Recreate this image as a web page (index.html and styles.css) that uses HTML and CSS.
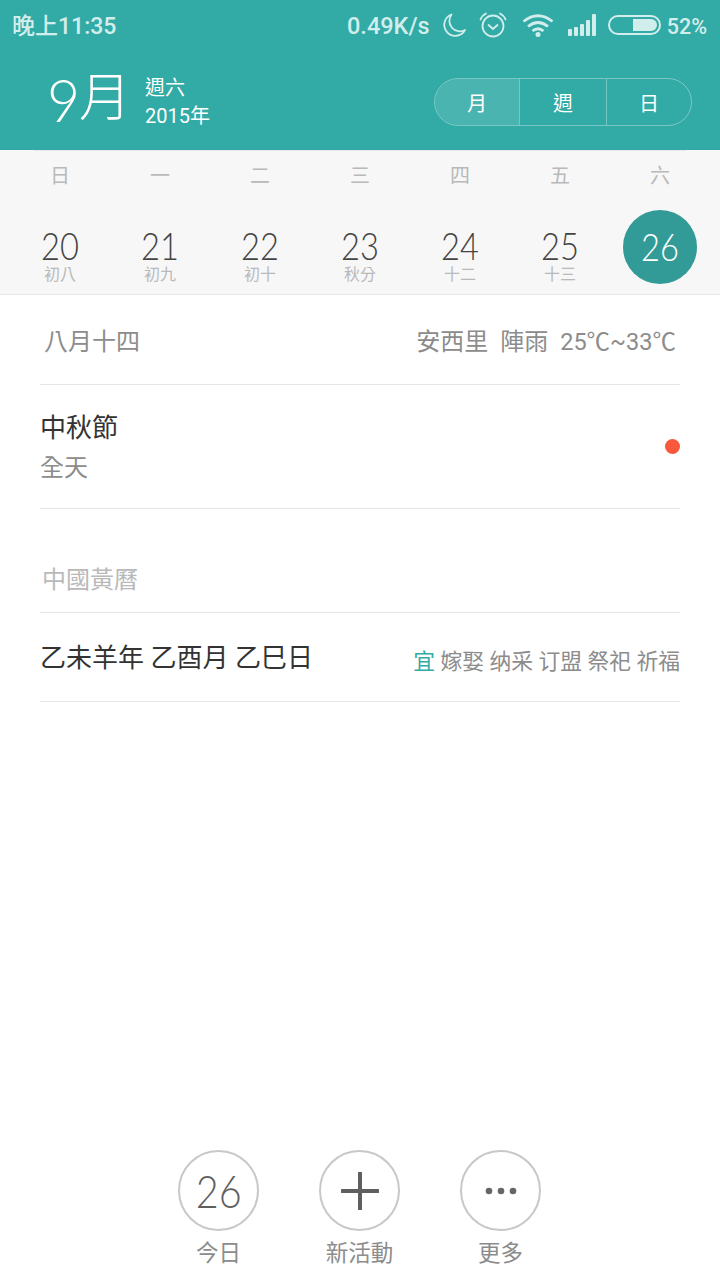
FILE: index.html
```html
<!DOCTYPE html>
<html lang="zh-Hant">
<head>
  <meta charset="UTF-8" />
  <meta name="viewport" content="width=device-width, initial-scale=1.0" />
  <title>日曆</title>
  <link rel="stylesheet" href="styles.css">
</head>
<body>
  <div class="app">
    <header class="top">
      <div class="status">
        <span class="clock">晚上11:35</span>
        <div class="status-right">
          <span class="speed">0.49K/s</span>
          <svg class="ic-moon" width="26" height="26" viewBox="0 0 26 26"><path d="M10.500 2.500a11 11 0 1 0 13.500 15.500a10.500 10.500 0 0 1-13.500-15.500z" fill="none" stroke="#d2eeec" stroke-width="1.800" stroke-linejoin="round"/></svg>
          <svg class="ic-alarm" width="28" height="26" viewBox="0 0 28 26"><circle cx="14" cy="14" r="10.500" fill="none" stroke="#d2eeec" stroke-width="1.800"/><path d="M9.500 13l4.500 4l4.500-4M1.500 7.500Q3 3.500 7 1.500M26.500 7.500Q25 3.500 21 1.500" fill="none" stroke="#d2eeec" stroke-width="1.800" stroke-linecap="round"/></svg>
          <svg class="ic-wifi" width="32" height="24" viewBox="0 0 32 24"><path d="M1.500 8.500Q16-3 30.500 8.500M6 13.500Q16 5.500 26 13.500M10.500 18Q16 13.500 21.500 18" fill="none" stroke="#d2eeec" stroke-width="2.800"/><circle cx="16" cy="21.500" r="2.500" fill="#d2eeec"/></svg>
          <svg class="ic-signal" width="28" height="22" viewBox="0 0 28 22"><g fill="#d2eeec"><rect x="0" y="15" width="4" height="7" rx="1"/><rect x="6" y="13" width="4" height="9" rx="1"/><rect x="12" y="10" width="4" height="12" rx="1"/><rect x="18" y="6" width="4" height="16" rx="1"/><rect x="24" y="0" width="4" height="22" rx="1"/></g></svg>
          <div class="battery"><div class="battery-fill"></div></div>
          <span class="percent">52%</span>
        </div>
      </div>
      <div class="title-bar">
        <div class="month"><span class="month-num">9</span><span class="month-char">月</span></div>
        <div class="month-sub">
          <span>週六</span>
          <span>2015年</span>
        </div>
        <div class="switch">
          <div class="switch-item active">月</div>
          <div class="switch-item">週</div>
          <div class="switch-item">日</div>
        </div>
      </div>
    </header>

    <section class="week">
      <div class="week-head">
        <span>日</span><span>一</span><span>二</span><span>三</span><span>四</span><span>五</span><span>六</span>
      </div>
      <div class="week-days">
        <div class="day"><b>20</b><small>初八</small></div>
        <div class="day"><b>21</b><small>初九</small></div>
        <div class="day"><b>22</b><small>初十</small></div>
        <div class="day"><b>23</b><small>秋分</small></div>
        <div class="day"><b>24</b><small>十二</small></div>
        <div class="day"><b>25</b><small>十三</small></div>
        <div class="day today"><div class="today-circle"><span>26</span></div></div>
      </div>
    </section>

    <main class="content">
      <div class="row row-info">
        <span class="lunar">八月十四</span>
        <span class="weather"><span>安西里</span><span>陣雨</span><span class="temp">25℃~33℃</span></span>
      </div>
      <div class="row row-event">
        <div>
          <div class="event-name">中秋節</div>
          <div class="event-time">全天</div>
        </div>
        <span class="dot"></span>
      </div>
      <div class="row row-label">中國黃曆</div>
      <div class="row row-almanac">
        <span class="ganzhi">乙未羊年 乙酉月 乙巳日</span>
        <span class="good"><em>宜</em> 嫁娶 纳采 订盟 祭祀 祈福</span>
      </div>
    </main>

    <footer class="actions">
      <div class="action">
        <div class="action-btn num"><span>26</span></div>
        <span>今日</span>
      </div>
      <div class="action">
        <div class="action-btn">
          <svg width="38" height="38" viewBox="0 0 38 38"><path d="M19 1v36M1 19h36" stroke="#5f5f5f" stroke-width="4" stroke-linecap="round"/></svg>
        </div>
        <span>新活動</span>
      </div>
      <div class="action">
        <div class="action-btn">
          <svg width="32" height="8" viewBox="0 0 32 8"><g fill="#666"><circle cx="4" cy="4" r="3.300"/><circle cx="16" cy="4" r="3.300"/><circle cx="28" cy="4" r="3.300"/></g></svg>
        </div>
        <span>更多</span>
      </div>
    </footer>
  </div>
</body>
</html>
```
FILE: styles.css
```css
:root {
  --teal: #32aaa5;
  --teal-dark: #329b97;
  --status: #d2eeec;
  --line: #e6e6e6;
}

* {
  box-sizing: border-box;
}

body {
  margin: 0;
  background: #fff;
  font-family: Roboto, "Noto Sans CJK TC", sans-serif;
}

.app {
  width: 720px;
  height: 1280px;
  display: flex;
  flex-direction: column;
  overflow: hidden;
}

.top {
  height: 150px;
  background: var(--teal);
  color: #fff;
}

.status {
  height: 50px;
  padding: 0 13px 0 12px;
  display: flex;
  align-items: center;
  justify-content: space-between;
  color: var(--status);
  font-weight: 500;
}

.clock {
  font-size: 23px;
  margin-top: -2px;
}

.status-right {
  display: flex;
  align-items: center;
}

.speed {
  font-size: 23.500px;
  margin-right: 11px;
  margin-top: 2px;
}

.ic-moon {
  margin-right: 12px;
}

.ic-alarm {
  margin-right: 15px;
}

.ic-wifi {
  margin-right: 14px;
}

.ic-signal {
  margin-right: 12px;
}

.battery {
  width: 53px;
  height: 20px;
  border: 2px solid var(--status);
  border-radius: 10px;
  padding: 2px;
  display: flex;
  justify-content: flex-end;
  margin-right: 6px;
}

.battery-fill {
  width: 24px;
  background: var(--status);
  border-radius: 0 7px 7px 0;
}

.percent {
  font-size: 21.500px;
  margin-top: 2px;
}

.title-bar {
  height: 100px;
  display: flex;
  align-items: center;
  padding: 4px 28px 0 47px;
}

.month {
  display: flex;
  align-items: center;
  width: 98px;
  margin-top: -6px;
  line-height: 1;
}

.month-num {
  font-family: Lato, sans-serif;
  font-weight: 300;
  font-size: 60px;
  width: 32px;
  transform: scaleX(0.95);
  transform-origin: left;
}

.month-char {
  font-weight: 300;
  font-size: 52px;
}

.month-sub {
  display: flex;
  flex-direction: column;
  gap: 4px;
  font-size: 20px;
  line-height: 24px;
  flex: 1;
}

.switch {
  width: 258px;
  height: 48px;
  border: 1px solid rgba(255, 255, 255, 0.35);
  border-radius: 24px;
  display: grid;
  grid-template-columns: 84px 87px 1fr;
  overflow: hidden;
}

.switch-item {
  display: flex;
  align-items: center;
  justify-content: center;
  font-size: 20px;
  border-left: 1px solid rgba(255, 255, 255, 0.35);
}

.switch-item:first-child {
  border-left: 0;
}

.switch-item.active {
  background: rgba(255, 255, 255, 0.12);
}

.week {
  height: 145px;
  background: #f7f7f7;
  border-bottom: 1px solid var(--line);
  padding: 0 10px;
}

.week::before {
  content: "";
  display: block;
  height: 1px;
  margin: 0 24px;
  background: #e8e8e8;
}

.week-head {
  display: grid;
  grid-template-columns: repeat(7, 100px);
  height: 46px;
  align-items: center;
  text-align: center;
  font-size: 20px;
  color: #b9b9b9;
}

.week-days {
  display: grid;
  grid-template-columns: repeat(7, 100px);
  margin-top: 13px;
}

.day {
  height: 74px;
  display: flex;
  flex-direction: column;
  align-items: center;
  padding-top: 19px;
}

.day b {
  font-family: Lato, sans-serif;
  font-weight: 300;
  font-size: 38px;
  line-height: 32px;
  color: #444;
  transform: scaleX(0.86);
}

.day small {
  font-size: 16px;
  line-height: 16px;
  margin-top: 6px;
  color: #b9b9b9;
}

.day.today {
  padding-top: 0;
}

.today-circle {
  width: 74px;
  height: 74px;
  border-radius: 50%;
  background: var(--teal-dark);
  color: #fff;
  font-family: Lato, sans-serif;
  font-weight: 300;
  font-size: 38px;
  display: flex;
  align-items: center;
  justify-content: center;
  padding-bottom: 2px;
}

.today-circle span {
  transform: scaleX(0.86);
}

.content {
  flex: 1;
  padding: 0 40px;
}

.row {
  display: flex;
  align-items: center;
  justify-content: space-between;
  border-bottom: 1px solid var(--line);
}

.row-info {
  height: 90px;
  padding: 0 4px;
  font-size: 24px;
  color: #8c8c8c;
}

.weather {
  display: flex;
  align-items: center;
  gap: 12px;
}

.temp {
  font-size: 23.500px;
}

.row-event {
  height: 124px;
}

.event-name {
  font-size: 26px;
  line-height: 32px;
  margin-top: 3px;
  color: #333;
}

.event-time {
  font-size: 24px;
  line-height: 32px;
  margin-top: 8px;
  color: #8c8c8c;
}

.dot {
  width: 15px;
  height: 15px;
  border-radius: 50%;
  background: #f7593a;
}

.row-label {
  height: 104px;
  padding: 33px 2px 0;
  font-size: 24px;
  color: #b9b9b9;
  justify-content: flex-start;
}

.row-almanac {
  height: 89px;
}

.ganzhi {
  font-size: 26px;
  color: #333;
  margin-top: -3px;
}

.good {
  font-size: 21.800px;
  color: #8c8c8c;
  margin-top: 4px;
}

.good em {
  font-style: normal;
  color: var(--teal);
}

.actions {
  display: flex;
  justify-content: center;
  gap: 60px;
  height: 131px;
  padding: 1px 1px 0 0;
}

.action {
  width: 81px;
  display: flex;
  flex-direction: column;
  align-items: center;
  font-size: 22.500px;
  line-height: 32px;
  color: #8c8c8c;
  white-space: nowrap;
  gap: 6px;
}

.action-btn {
  width: 81px;
  height: 81px;
  flex: none;
  border: 2px solid #c8c8c8;
  border-radius: 50%;
  display: flex;
  align-items: center;
  justify-content: center;
}

.action-btn.num {
  font-family: Lato, sans-serif;
  font-weight: 300;
  font-size: 46px;
  color: #5f5f5f;
}

.action-btn.num span {
  transform: scaleX(0.86);
}
```
